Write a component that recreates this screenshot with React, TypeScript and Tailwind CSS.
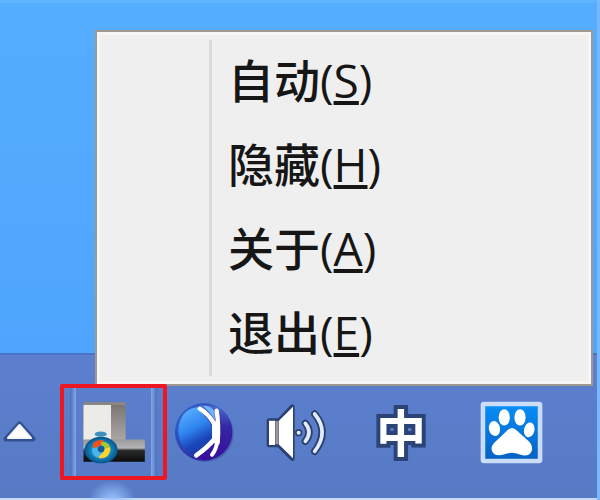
/**
 * System tray with the context menu of the highlighted tray icon.
 */

const MENU_ITEMS = [
  { label: "自动", hotkey: "S" },
  { label: "隐藏", hotkey: "H" },
  { label: "关于", hotkey: "A" },
  { label: "退出", hotkey: "E" },
];

export default function App() {
  return (
    <div className="relative flex min-h-screen flex-col overflow-hidden bg-[#54abff] font-['Open_Sans','Noto_Sans_CJK_SC',sans-serif]">
      <main className="relative min-h-[353px] flex-1 border-t-3 border-[#5fb6ff] bg-linear-to-b from-[#55adff] to-[#4fa5fd]">
        <ContextMenu />
      </main>
      <Taskbar />
      <div className="absolute inset-y-0 right-0 w-[3px] bg-[#79b8ff]" />
    </div>
  );
}

/* Menu opens upwards and overlaps the taskbar */
function ContextMenu() {
  return (
    <div
      role="menu"
      className="absolute -bottom-[33px] left-[95px] right-[7px] z-10 flex border-2 border-[#a1988f] bg-[#efefef] py-2 shadow-[inset_0_0_0_3px_#f8f6f4]"
    >
      <div className="w-28 shrink-0" />
      <div className="flex-1 border-l-3 border-[#d9d9d9]">
        {MENU_ITEMS.map((item) => (
          <button
            key={item.hotkey}
            role="menuitem"
            type="button"
            className="flex h-21 w-full items-center pb-1 pl-4 text-left text-[46px] leading-none font-medium text-[#161616]"
          >
            <span>
              {item.label}(
              <span className="underline decoration-4 underline-offset-3 [text-decoration-skip-ink:none]">
                {item.hotkey}
              </span>
              )
            </span>
          </button>
        ))}
      </div>
    </div>
  );
}

function Taskbar() {
  return (
    <footer className="h-[147px] border-t-2 border-b-2 border-t-[#4b74c4] border-b-[#c9d9f5] bg-linear-to-b from-[#5c80cf] to-[#567ac4] pt-[29px]">
      <div className="relative z-20 flex h-24 items-center">
        <button type="button" aria-label="Show hidden icons" className="w-10 shrink-0">
          <ArrowIcon />
        </button>
        <button
          type="button"
          aria-label="Computer"
          className="relative ml-5 flex h-24 w-[107px] shrink-0 items-center justify-center rounded-xs border-4 border-[#ee1620]"
        >
          <span className="absolute inset-y-0 left-1.5 w-1.5 bg-linear-to-r from-[#496fb5] to-[#86a8ea]" />
          <span className="absolute inset-y-0 right-1.5 w-1.5 bg-linear-to-r from-[#86a8ea] to-[#496fb5]" />
          <ComputerIcon />
        </button>
        <button type="button" aria-label="Network sphere" className="ml-1 w-16 shrink-0">
          <SphereIcon />
        </button>
        <button type="button" aria-label="Volume" className="ml-7 w-18 shrink-0">
          <SpeakerIcon />
        </button>
        <button
          type="button"
          aria-label="Input method"
          className="ml-9 w-15 shrink-0 pb-1 text-center font-['Noto_Sans_CJK_SC',sans-serif] text-[50px] leading-none font-bold text-white [-webkit-text-stroke:8px_#2b4478] [paint-order:stroke_fill] [stroke-linejoin:round]"
        >
          中
        </button>
        <button type="button" aria-label="Baidu" className="ml-12 w-16 shrink-0 pl-px">
          <PawIcon />
        </button>
      </div>
      <div className="ml-[88px] h-5 w-12 bg-radial-[at_50%_100%] from-[#9cc4ff] to-transparent to-70%" />
    </footer>
  );
}

/* ── Icons ── */

function ArrowIcon() {
  return (
    <svg viewBox="0 0 40 32" className="block w-full">
      <path d="M19.500 8 L33 23 H6 Z" fill="#2d4684" stroke="#2d4684" strokeWidth="5" strokeLinejoin="round" opacity=".8" />
      <path d="M19.500 9 L31 22 H8 Z" fill="#fff" stroke="#f3f5fb" strokeWidth="2" strokeLinejoin="round" />
    </svg>
  );
}

function ComputerIcon() {
  return (
    <svg viewBox="240 188 198 190" className="block h-[63px] w-[66px]">
      <defs>
        <linearGradient id="tower" x1="0" y1="0" x2="0" y2="1">
          <stop offset="0" stopColor="#77736f" />
          <stop offset="1" stopColor="#aaa7a5" />
        </linearGradient>
        <linearGradient id="base" x1="0" y1="0" x2="0" y2="1">
          <stop offset="0" stopColor="#9a9a9a" />
          <stop offset=".38" stopColor="#b4b4b4" />
          <stop offset=".5" stopColor="#2a2a2a" />
          <stop offset="1" stopColor="#0c0c0c" />
        </linearGradient>
        <radialGradient id="globe">
          <stop offset="0" stopColor="#65ccf4" />
          <stop offset=".6" stopColor="#1685bd" />
          <stop offset="1" stopColor="#07538c" />
        </radialGradient>
      </defs>
      <path d="M247 192H374V306H247Z" fill="url(#tower)" />
      <path d="M247 200H330V306H247Z" fill="#edebe8" />
      <path d="M247 192H374V200H247Z" fill="#8a8784" />
      <path d="M247 304H432V371H247Z" fill="url(#base)" />
      <ellipse cx="299" cy="288" rx="18" ry="8" fill="#3c91bc" />
      <ellipse cx="300" cy="336" rx="50" ry="40" fill="url(#globe)" />
      <path d="M274 327Q274 303 308 306Q303 316 302 324Q288 319 284 336Z" fill="#f1501e" />
      <path d="M302 310Q331 311 328 341L312 337Q314 322 300 322Z" fill="#a9c92b" />
      <path d="M328 328Q328 362 294 361L288 349Q310 349 310 331Z" fill="#ffd22e" />
      <path d="M274 329Q268 352 290 360L304 344Q288 345 288 329Z" fill="#48b5ef" />
      <circle cx="300" cy="333" r="10" fill="#145b94" />
    </svg>
  );
}

function SphereIcon() {
  return (
    <svg viewBox="34 62 192 192" className="block w-full">
      <defs>
        <radialGradient id="rim" cx=".4" cy=".4" r=".65">
          <stop offset="0" stopColor="#4da5fb" />
          <stop offset=".6" stopColor="#2a55c4" />
          <stop offset="1" stopColor="#331496" />
        </radialGradient>
        <linearGradient id="face" x1=".2" y1="0" x2=".6" y2="1">
          <stop offset="0" stopColor="#5db4ff" />
          <stop offset=".45" stopColor="#2f84f0" />
          <stop offset=".75" stopColor="#1a46b8" />
          <stop offset="1" stopColor="#1c3ba6" />
        </linearGradient>
        <linearGradient id="shade" x1="0" y1="0" x2="0" y2="1">
          <stop offset="0" stopColor="#4a6fd0" />
          <stop offset=".4" stopColor="#3426a4" />
          <stop offset="1" stopColor="#3a0c9c" />
        </linearGradient>
      </defs>
      <circle cx="137" cy="163" r="85" fill="#2c3f8b" opacity=".4" />
      <circle cx="132" cy="158" r="86" fill="url(#rim)" />
      <path d="M120 78Q212 68 216 158Q212 230 136 243L105 232L160 170Z" fill="url(#shade)" />
      <path d="M112 84Q62 90 56 152Q58 206 104 228L158 182Q168 156 152 130Z" fill="url(#face)" />
      <path d="M130 80Q154 78 164 96L166 122Q152 98 130 80Z" fill="#6fb4fa" />
      <g fill="none" stroke="#fff" strokeLinecap="round" strokeLinejoin="round">
        <path d="M120 88Q148 104 166 138" strokeWidth="13" />
        <path d="M171 94Q178 140 174 190" strokeWidth="13" />
        <path d="M167 136V182" strokeWidth="20" />
        <path d="M164 180Q142 206 110 228" strokeWidth="14" />
        <path d="M173 184Q170 210 157 226" strokeWidth="12" />
      </g>
    </svg>
  );
}

function SpeakerIcon() {
  return (
    <svg viewBox="308 62 216 192" className="block w-full" strokeLinecap="round" strokeLinejoin="round">
      <g stroke="#2b4172" fill="none">
        <path d="M326 124H356L396 82V238L356 197H326Z" strokeWidth="14" fill="#2b4172" />
        <path d="M435 132Q457 158 435 186" strokeWidth="22" />
        <path d="M463 104Q508 158 463 216" strokeWidth="22" />
        <circle cx="415" cy="160" r="5" strokeWidth="12" />
      </g>
      <path d="M326 124H344V197H326ZM355 125L398 82V237L355 195Z" fill="#fff" />
      <path d="M349 125V195" stroke="#9b9691" strokeWidth="8" strokeLinecap="butt" />
      <path d="M435 132Q457 158 435 186M463 104Q508 158 463 216" fill="none" stroke="#e3ebfb" strokeWidth="11" />
      <circle cx="415" cy="160" r="6" fill="#e3ebfb" />
    </svg>
  );
}

function PawIcon() {
  return (
    <svg viewBox="386 65 192 192" className="block w-full">
      <defs>
        <linearGradient id="tile" x1="0" y1="0" x2="0" y2="1">
          <stop offset="0" stopColor="#078cf5" />
          <stop offset="1" stopColor="#0661c4" />
        </linearGradient>
      </defs>
      <rect x="388" y="67" width="188" height="188" rx="10" fill="#cbdcf8" />
      <rect x="402" y="81" width="160" height="160" fill="url(#tile)" />
      <g fill="#fff">
        <ellipse cx="460" cy="115" rx="17" ry="25" />
        <ellipse cx="508" cy="115" rx="17" ry="25" />
        <ellipse cx="430" cy="149" rx="17" ry="23" transform="rotate(-12 430 149)" />
        <ellipse cx="536" cy="153" rx="16" ry="23" transform="rotate(12 536 153)" />
        <path d="M469 155Q484 139 499 156L537 190Q552 208 539 225Q530 235 507 228Q483 218 459 228Q430 236 423 218Q416 202 436 186Z" />
      </g>
    </svg>
  );
}
